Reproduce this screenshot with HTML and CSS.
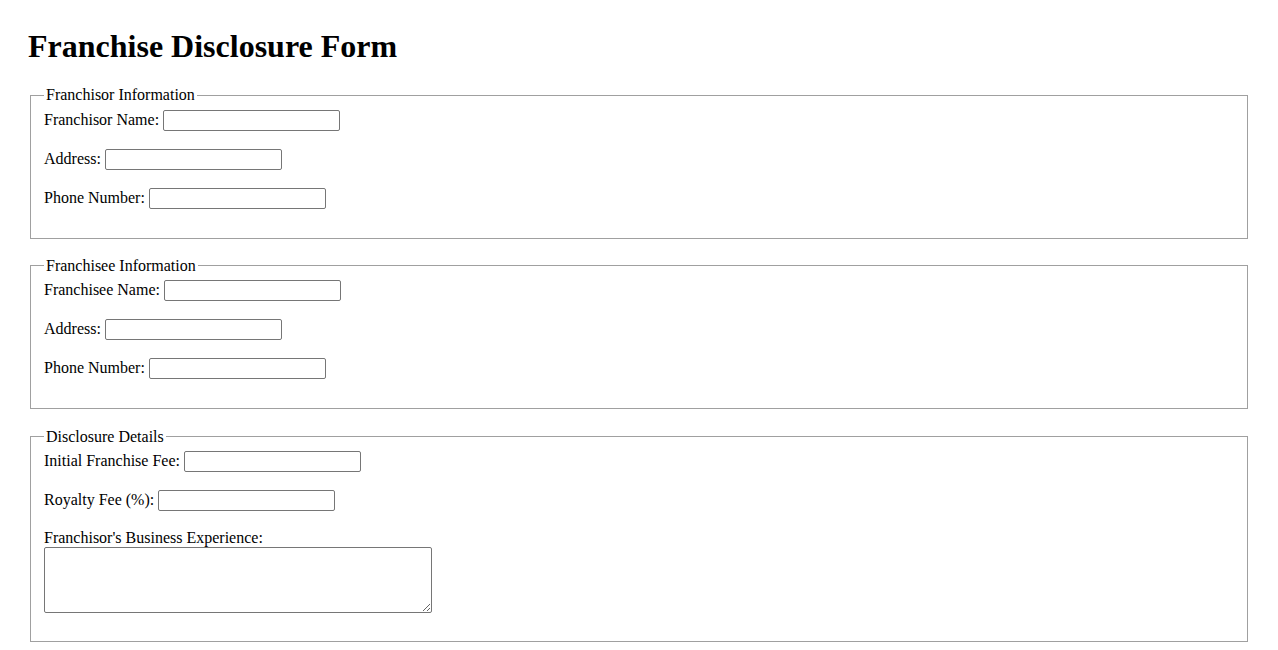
FILE: index.html
```html
<!DOCTYPE html>
<html lang="en">
<head>
<meta charset="utf-8">
<title>Franchise Disclosure Form</title>
<link rel="stylesheet" href="styles.css">
</head>
<body>
<h1 class="title">Franchise Disclosure Form</h1>
<form class="form">
  <fieldset class="section">
    <legend class="section-legend">Franchisor Information</legend>
    <div class="row"><label class="lbl" for="fn">Franchisor Name:</label><input class="field" type="text" id="fn"></div>
    <div class="row"><label class="lbl" for="fa">Address:</label><input class="field" type="text" id="fa"></div>
    <div class="row"><label class="lbl" for="fp">Phone Number:</label><input class="field" type="text" id="fp"></div>
  </fieldset>
  <fieldset class="section">
    <legend class="section-legend">Franchisee Information</legend>
    <div class="row"><label class="lbl" for="en">Franchisee Name:</label><input class="field" type="text" id="en"></div>
    <div class="row"><label class="lbl" for="ea">Address:</label><input class="field" type="text" id="ea"></div>
    <div class="row"><label class="lbl" for="ep">Phone Number:</label><input class="field" type="text" id="ep"></div>
  </fieldset>
  <fieldset class="section section-last">
    <legend class="section-legend">Disclosure Details</legend>
    <div class="row"><label class="lbl" for="ff">Initial Franchise Fee:</label><input class="field" type="text" id="ff"></div>
    <div class="row"><label class="lbl" for="rf">Royalty Fee (%):</label><input class="field" type="text" id="rf"></div>
    <div class="block-row">
      <label class="lbl-block" for="be">Franchisor's Business Experience:</label>
      <textarea class="area" id="be"></textarea>
    </div>
  </fieldset>
</form>
</body>
</html>
```

FILE: styles.css
```css
html, body {
  background: #ffffff;
}
body {
  margin: 0;
  padding: 28px;
  font-family: "Liberation Serif", "Times New Roman", serif;
  font-size: 16px;
  color: #000000;
}
.title {
  margin: 0 0 21.44px 0;
  font-size: 32px;
  font-weight: bold;
  line-height: normal;
}
.form {
  margin: 0;
}
.section {
  margin: 0 2px 18px 2px;
  padding: 5.6px 13px 10.5px 13px;
  border: 1px solid #a0a0a0;
}
.section-last {
  margin-top: 19px;
}
.section-legend {
  padding: 0 2px;
  line-height: normal;
}
.row {
  display: flex;
  align-items: center;
  height: 21px;
  margin-bottom: 18px;
}
.lbl {
  margin-right: 4px;
  line-height: normal;
  white-space: nowrap;
  position: relative;
  top: -1px;
}
.field {
  box-sizing: border-box;
  width: 177px;
  height: 21px;
  margin: 0;
  padding: 1px 2px;
  border: 1px solid #767676;
  border-radius: 2px;
  font-family: "Liberation Sans", Arial, sans-serif;
  font-size: 13.33px;
  background: #ffffff;
}
.block-row {
  margin-bottom: 17px;
}
.lbl-block {
  display: block;
  line-height: normal;
}
.area {
  display: block;
  box-sizing: border-box;
  width: 388px;
  height: 66px;
  margin: 0;
  padding: 2px;
  border: 1px solid #767676;
  border-radius: 2px;
  font-family: "Liberation Mono", monospace;
  font-size: 13.33px;
  background: #ffffff;
}
```
